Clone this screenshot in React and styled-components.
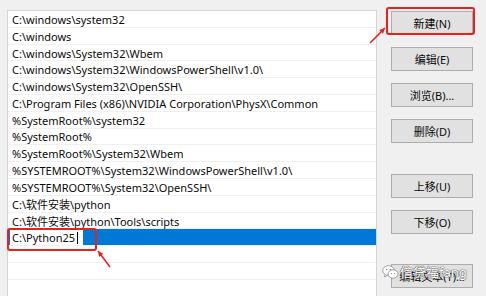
import React from 'react';
import styled, { createGlobalStyle } from 'styled-components';

const GlobalStyle = createGlobalStyle`
  html, body { margin: 0; padding: 0; background: #f0f0f0; }
  body { font-family: "Noto Sans", "Noto Sans CJK SC", sans-serif; }
`;

const Dialog = styled.div`
  position: relative;
  width: 486px;
  height: 296px;
  overflow: hidden;
  background: #f0f0f0;
  display: flex;
  align-items: flex-start;
  gap: 14px;
  padding: 10px 0 0 7px;
  box-sizing: border-box;
`;

const PathList = styled.div`
  width: 370px;
  height: 300px;
  flex-shrink: 0;
  background: #fff;
  border: 1px solid #d4d4d4;
  border-bottom: none;
  box-sizing: border-box;
`;

const Row = styled.div`
  height: 16.8px;
  box-sizing: border-box;
  border-bottom: 1px solid #f0f0f0;
  padding-left: ${p => (p.$selected ? '2px' : '4px')};
  padding-top: 1px;
  display: flex;
  align-items: center;
  font-size: 11px;
  color: #0a0a0a;
  white-space: nowrap;
  background: ${p => (p.$selected ? '#0078d7' : 'transparent')};
`;

const EditBox = styled.div`
  width: 73px;
  flex-shrink: 0;
  height: 15px;
  overflow: hidden;
  background: #fff;
  padding-left: 2px;
  box-sizing: border-box;
  display: flex;
  align-items: center;
`;

const Caret = styled.span`
  display: inline-block;
  flex-shrink: 0;
  width: 1px;
  height: 12px;
  margin-left: 2px;
  background: #000;
`;

const ButtonColumn = styled.div`
  display: flex;
  flex-direction: column;
  gap: 12px;
  padding-top: 1px;
`;

const Button = styled.div`
  width: 82px;
  height: 24px;
  box-sizing: border-box;
  margin-top: ${p => p.$push || 0}px;
  background: #e1e1e1;
  border: 1px solid #adadad;
  display: flex;
  align-items: center;
  justify-content: center;
  font-size: 11px;
  color: #0a0a0a;
  white-space: nowrap;
`;

const Highlight = styled.div`
  position: absolute;
  left: ${p => p.$x}px;
  top: ${p => p.$y}px;
  width: ${p => p.$w}px;
  height: ${p => p.$h}px;
  border: 2px solid #e8201e;
  border-radius: 3px;
  box-sizing: border-box;
  pointer-events: none;
`;

const Arrow = styled.svg`
  position: absolute;
  left: 0;
  top: 0;
  overflow: visible;
`;

const Watermark = styled.div`
  position: absolute;
  left: 382px;
  top: 262px;
  display: flex;
  align-items: center;
  gap: 1px;
  font-size: 13px;
  color: #fff;
  text-shadow: 0 0 1px #555, 0 0 1px #555, 0 0 1px #555;
`;

const paths = [
  'C:\\windows\\system32',
  'C:\\windows',
  'C:\\windows\\System32\\Wbem',
  'C:\\windows\\System32\\WindowsPowerShell\\v1.0\\',
  'C:\\windows\\System32\\OpenSSH\\',
  'C:\\Program Files (x86)\\NVIDIA Corporation\\PhysX\\Common',
  '%SystemRoot%\\system32',
  '%SystemRoot%',
  '%SystemRoot%\\System32\\Wbem',
  '%SYSTEMROOT%\\System32\\WindowsPowerShell\\v1.0\\',
  '%SYSTEMROOT%\\System32\\OpenSSH\\',
  'C:\\软件安装\\python',
  'C:\\软件安装\\python\\Tools\\scripts',
];

function RedArrow({ x1, y1, x2, y2 }) {
  const ang = Math.atan2(y2 - y1, x2 - x1);
  const hl = 6;
  const a1 = ang + Math.PI - 0.45;
  const a2 = ang + Math.PI + 0.45;
  const p1 = `${x2 + hl * Math.cos(a1)},${y2 + hl * Math.sin(a1)}`;
  const p2 = `${x2 + hl * Math.cos(a2)},${y2 + hl * Math.sin(a2)}`;
  return (
    <Arrow width="1" height="1">
      <line x1={x1} y1={y1} x2={x2} y2={y2} stroke="#e8201e" strokeWidth="1.6" />
      <polygon points={`${x2},${y2} ${p1} ${p2}`} fill="#e8201e" />
    </Arrow>
  );
}

export default function App() {
  return (
    <>
      <GlobalStyle />
      <Dialog>
        <PathList>
          {paths.map(p => (
            <Row key={p}>{p}</Row>
          ))}
          <Row $selected>
            <EditBox>
              <span>C:\Python25</span>
              <Caret />
            </EditBox>
          </Row>
          <Row />
          <Row />
          <Row />
        </PathList>
        <ButtonColumn>
          <Button>新建(N)</Button>
          <Button>编辑(E)</Button>
          <Button>浏览(B)...</Button>
          <Button>删除(D)</Button>
          <Button $push={19}>上移(U)</Button>
          <Button>下移(O)</Button>
          <Button $push={18}>编辑文本(T)...</Button>
        </ButtonColumn>

        <Highlight $x={386} $y={7} $w={89} $h={28} />
        <Highlight $x={7} $y={228} $w={90} $h={23} />
        <RedArrow x1={370} y1={43} x2={385} y2={28} />
        <RedArrow x1={110} y1={267} x2={98} y2={251} />

        <Watermark>
          <svg width="17" height="16" viewBox="0 0 17 16">
            <ellipse cx="6.5" cy="6.5" rx="5.8" ry="4.8" fill="#fff" stroke="#888" strokeWidth="0.8" />
            <path d="M3 10.5 L2.5 13 L5.5 11" fill="#fff" stroke="#888" strokeWidth="0.8" />
            <ellipse cx="11" cy="10" rx="5" ry="4.2" fill="#fff" stroke="#888" strokeWidth="0.8" />
            <circle cx="4.6" cy="5.6" r="0.8" fill="#888" />
            <circle cx="8.4" cy="5.6" r="0.8" fill="#888" />
            <circle cx="9.4" cy="9.6" r="0.6" fill="#888" />
            <circle cx="12.6" cy="9.6" r="0.6" fill="#888" />
          </svg>
          <span>信贷福fang</span>
        </Watermark>
      </Dialog>
    </>
  );
}
